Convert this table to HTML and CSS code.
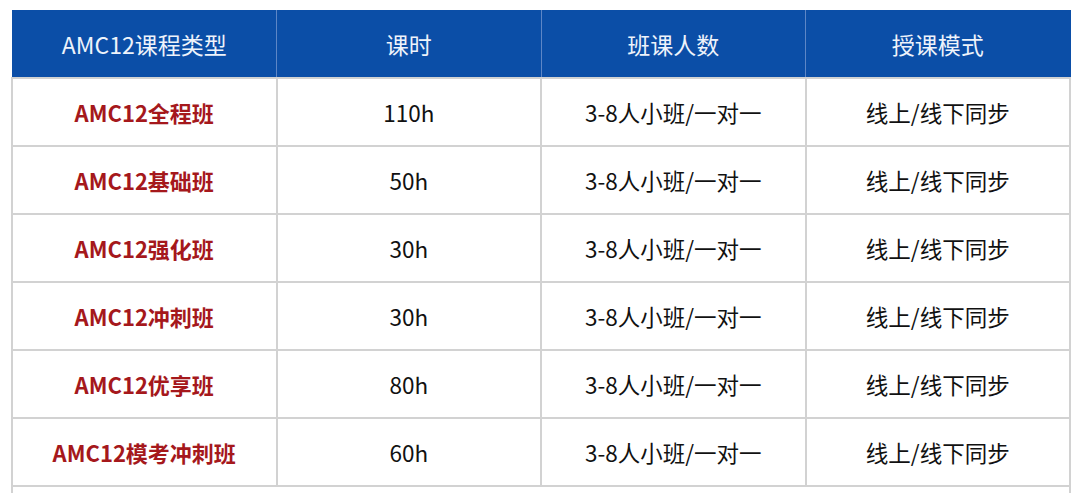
FILE: index.html
```html
<!DOCTYPE html>
<html lang="zh-CN">
<head>
<meta charset="utf-8">
<link rel="stylesheet" href="styles.css">
</head>
<body>
<table class="course-table">
  <thead>
    <tr>
      <th>AMC12课程类型</th>
      <th>课时</th>
      <th>班课人数</th>
      <th>授课模式</th>
    </tr>
  </thead>
  <tbody>
    <tr><td class="name">AMC12全程班</td><td>110h</td><td>3-8人小班/一对一</td><td>线上/线下同步</td></tr>
    <tr><td class="name">AMC12基础班</td><td>50h</td><td>3-8人小班/一对一</td><td>线上/线下同步</td></tr>
    <tr><td class="name">AMC12强化班</td><td>30h</td><td>3-8人小班/一对一</td><td>线上/线下同步</td></tr>
    <tr><td class="name">AMC12冲刺班</td><td>30h</td><td>3-8人小班/一对一</td><td>线上/线下同步</td></tr>
    <tr><td class="name">AMC12优享班</td><td>80h</td><td>3-8人小班/一对一</td><td>线上/线下同步</td></tr>
    <tr><td class="name">AMC12模考冲刺班</td><td>60h</td><td>3-8人小班/一对一</td><td>线上/线下同步</td></tr>
    <tr class="extra"><td colspan="4"></td></tr>
  </tbody>
</table>
</body>
</html>
```
FILE: styles.css
```css
html, body {
  margin: 0;
  padding: 0;
  background: #ffffff;
}
body {
  padding: 10px 0 0 11px;
  font-family: "Noto Sans CJK SC", "Noto Sans", sans-serif;
}
.course-table {
  width: 1060px;
  border-collapse: collapse;
  table-layout: fixed;
}
.course-table th {
  background: #0b4ea7;
  color: #eef3fb;
  font-weight: 400;
  font-size: 23px;
  height: 67px;
  padding: 0;
  text-align: center;
  border-left: 1px solid #5d86c6;
  border-right: 1px solid #5d86c6;
}
.course-table th:first-child { border-left-color: #0b4ea7; }
.course-table th:last-child { border-right-color: #0b4ea7; }
.course-table td {
  height: 66px;
  padding: 0;
  text-align: center;
  font-size: 22.5px;
  color: #111111;
  border: 2px solid #d2d2d2;
}
.course-table td.name {
  color: #a5181c;
  font-weight: 700;
  font-size: 22px;
}
.course-table tr.extra td {
  height: 6px;
  border-bottom: 0;
}
```
